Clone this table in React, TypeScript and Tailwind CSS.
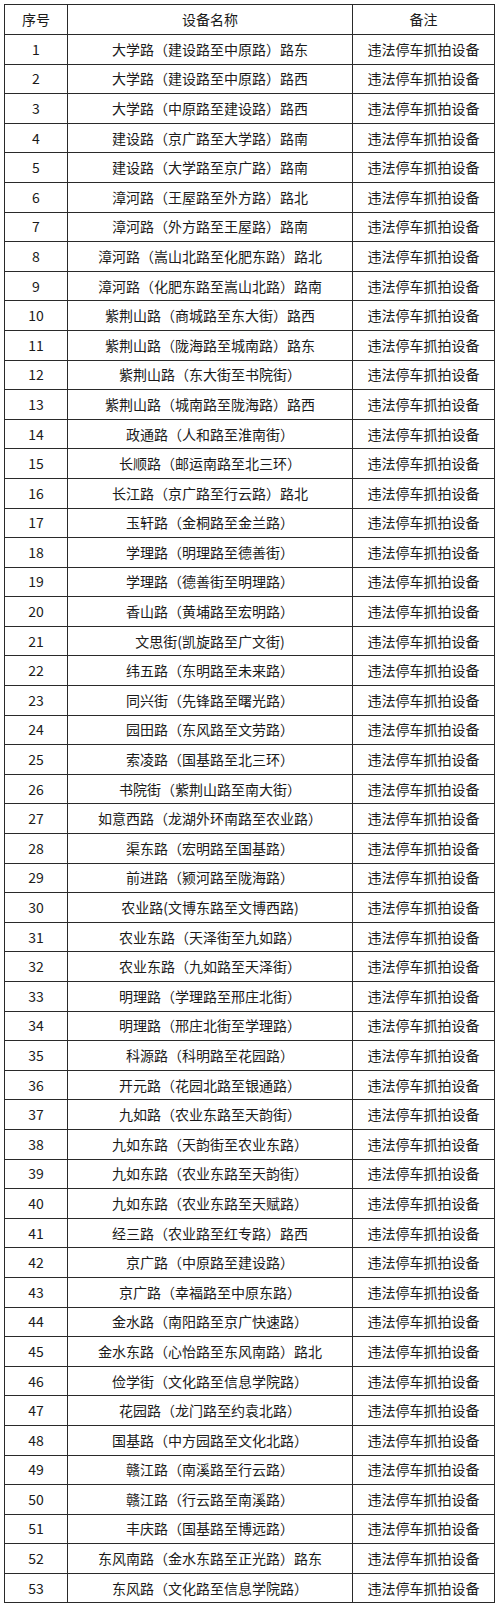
import React from 'react'

const rows: string[] = [
  '大学路（建设路至中原路）路东',
  '大学路（建设路至中原路）路西',
  '大学路（中原路至建设路）路西',
  '建设路（京广路至大学路）路南',
  '建设路（大学路至京广路）路南',
  '漳河路（王屋路至外方路）路北',
  '漳河路（外方路至王屋路）路南',
  '漳河路（嵩山北路至化肥东路）路北',
  '漳河路（化肥东路至嵩山北路）路南',
  '紫荆山路（商城路至东大街）路西',
  '紫荆山路（陇海路至城南路）路东',
  '紫荆山路（东大街至书院街）',
  '紫荆山路（城南路至陇海路）路西',
  '政通路（人和路至淮南街）',
  '长顺路（邮运南路至北三环）',
  '长江路（京广路至行云路）路北',
  '玉轩路（金桐路至金兰路）',
  '学理路（明理路至德善街）',
  '学理路（德善街至明理路）',
  '香山路（黄埔路至宏明路）',
  '文思街(凯旋路至广文街)',
  '纬五路（东明路至未来路）',
  '同兴街（先锋路至曙光路）',
  '园田路（东风路至文劳路）',
  '索凌路（国基路至北三环）',
  '书院街（紫荆山路至南大街）',
  '如意西路（龙湖外环南路至农业路）',
  '渠东路（宏明路至国基路）',
  '前进路（颍河路至陇海路）',
  '农业路(文博东路至文博西路)',
  '农业东路（天泽街至九如路）',
  '农业东路（九如路至天泽街）',
  '明理路（学理路至邢庄北街）',
  '明理路（邢庄北街至学理路）',
  '科源路（科明路至花园路）',
  '开元路（花园北路至银通路）',
  '九如路（农业东路至天韵街）',
  '九如东路（天韵街至农业东路）',
  '九如东路（农业东路至天韵街）',
  '九如东路（农业东路至天赋路）',
  '经三路（农业路至红专路）路西',
  '京广路（中原路至建设路）',
  '京广路（幸福路至中原东路）',
  '金水路（南阳路至京广快速路）',
  '金水东路（心怡路至东风南路）路北',
  '俭学街（文化路至信息学院路）',
  '花园路（龙门路至约袁北路）',
  '国基路（中方园路至文化北路）',
  '赣江路（南溪路至行云路）',
  '赣江路（行云路至南溪路）',
  '丰庆路（国基路至博远路）',
  '东风南路（金水东路至正光路）路东',
  '东风路（文化路至信息学院路）',
]

const cell = 'border border-[#2a2a2a] text-center align-middle p-0'

function App() {
  return (
    <div className="min-h-[1609px] w-[500px] bg-white pt-[4px] pl-[4px] text-[14px] text-[#1a1a1a] [font-family:'Noto_Sans_CJK_SC','Liberation_Sans',sans-serif]">
      <table className="w-[491px] table-fixed border-collapse">
        <colgroup>
          <col className="w-[63px]" />
          <col className="w-[285px]" />
          <col />
        </colgroup>
        <thead>
          <tr className="h-[30px]">
            <th className={cell + ' font-normal'}>序号</th>
            <th className={cell + ' font-normal'}>设备名称</th>
            <th className={cell + ' font-normal'}>备注</th>
          </tr>
        </thead>
        <tbody>
          {rows.map((name, i) => (
            <tr key={i} className="h-[29.6px]">
              <td className={cell}>{i + 1}</td>
              <td className={cell}>{name}</td>
              <td className={cell}>违法停车抓拍设备</td>
            </tr>
          ))}
        </tbody>
      </table>
    </div>
  )
}

export default App
